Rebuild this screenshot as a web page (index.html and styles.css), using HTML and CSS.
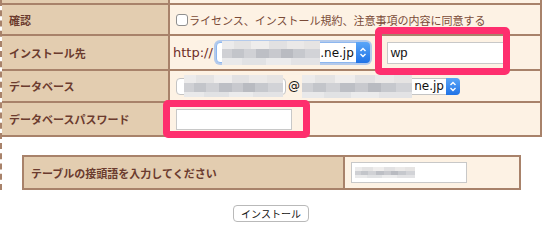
FILE: index.html
```html
<!DOCTYPE html>
<html>
<head>
  <title>インストール</title>
  <link rel="stylesheet" href="styles.css">
</head>
<body>
  <div class="page">
    <div class="setup">
      <div class="label cut"></div>
      <div class="value cut"></div>

      <div class="label">確認</div>
      <div class="value">
        <span class="check"></span><span class="agree">ライセンス、インストール規約、注意事項の内容に同意する</span>
      </div>

      <div class="label">インストール先</div>
      <div class="value">
        <span class="scheme">http://</span>
        <span class="select select-host is-focused">
          <span class="mosaic mosaic-host"></span>
          <span class="select-text">.ne.jp</span>
          <span class="select-arrow">
            <svg width="8" height="11" viewBox="0 0 8 11"><path d="M1.5 4 L4 1.5 L6.5 4 M1.5 7 L4 9.5 L6.5 7" fill="none" stroke="#fff" stroke-width="1.4"/></svg>
          </span>
        </span>
        <span class="marked marked-dir"><span class="textbox textbox-dir">wp</span></span>
      </div>

      <div class="label">データベース</div>
      <div class="value">
        <span class="select select-user">
          <span class="mosaic mosaic-user"></span>
        </span>
        <span class="at">@</span>
        <span class="select select-dbhost">
          <span class="mosaic mosaic-dbhost"></span>
          <span class="select-text">ne.jp</span>
          <span class="select-arrow">
            <svg width="8" height="11" viewBox="0 0 8 11"><path d="M1.5 4 L4 1.5 L6.5 4 M1.5 7 L4 9.5 L6.5 7" fill="none" stroke="#fff" stroke-width="1.4"/></svg>
          </span>
        </span>
      </div>

      <div class="label">データベースパスワード</div>
      <div class="value">
        <span class="marked marked-pass"><span class="textbox textbox-pass"></span></span>
      </div>
    </div>

    <div class="prefix">
      <div class="label">テーブルの接頭語を入力してください</div>
      <div class="value">
        <span class="textbox textbox-prefix"><span class="mosaic mosaic-prefix"></span></span>
      </div>
    </div>
  </div>

  <div class="actions">
    <button class="install" type="button">インストール</button>
  </div>
</body>
</html>
```

FILE: styles.css
```css
body {
  margin: 0;
  background: #fff;
  font-family: "Noto Sans CJK JP", sans-serif;
  font-size: 11px;
}

/* outer frame with the dashed edge */
.page {
  width: 540px;
  border-left: 2px dashed #a8826a;
  height: 190px;
}

/* main settings table */
.setup {
  display: grid;
  grid-template-columns: 166px 370px;
  grid-template-rows: 3px 29px 33px 30px 32px;
  gap: 2px;
  padding: 0 2px 2px 0;
  background: #a8826a;
}

.label {
  background: #e3cdb0;
  color: #6b3b2e;
  font-weight: bold;
  display: flex;
  align-items: center;
  padding-left: 7px;
}

.value {
  background: #fdf2e4;
  color: #7a4a37;
  display: flex;
  align-items: center;
  padding-left: 3px;
}

.cut {
  padding: 0;
}

/* checkbox row */
.check {
  width: 10px;
  height: 10px;
  margin-left: 3px;
  border: 1px solid #8f8f8f;
  border-radius: 3px;
  background: #fff;
}

.agree {
  margin-left: 1px;
}

/* url row */
.scheme {
  font-family: "DejaVu Sans", sans-serif;
  font-size: 13px;
  color: #6e2e28;
}

.select {
  position: relative;
  display: flex;
  align-items: center;
  background: #fff;
  border: 1px solid #c4c4c4;
  border-radius: 4px;
  font-family: "DejaVu Sans", sans-serif;
  font-size: 12px;
  color: #111;
}

.select-host {
  width: 152px;
  height: 19px;
  margin-left: 3px;
}

.is-focused {
  border-color: #8db7ef;
  box-shadow: 0 0 0 2px rgba(120, 170, 240, 0.55);
}

.select-user {
  width: 108px;
  height: 15px;
  margin-left: 3px;
}

.select-dbhost {
  width: 155px;
  height: 15px;
  margin-left: 3px;
}

.select-text {
  margin-left: auto;
  margin-right: 2px;
}

.select-arrow {
  width: 14px;
  align-self: stretch;
  margin: -1px -1px -1px 0;
  border-radius: 0 4px 4px 0;
  background: linear-gradient(#5aa6f8, #2173e6);
  display: flex;
  align-items: center;
  justify-content: center;
}

.at {
  font-family: "DejaVu Sans", sans-serif;
  font-size: 12px;
  color: #111;
  margin-left: 2px;
}

/* blurred values */
.mosaic {
  display: inline-block;
  height: 24px;
  background-image:
    linear-gradient(90deg, #ecebeb 0 12%, #e4e3e3 12% 30%, #efedec 30% 48%, #e2e1e2 48% 66%, #ebe9e8 66% 84%, #e6e4e3 84%),
    linear-gradient(90deg, #cfd0d4 0 10%, #c3c5ca 10% 22%, #d0d1d5 22% 35%, #bdbfc5 35% 48%, #c8c9ce 48% 60%, #b9bbc1 60% 72%, #c6c8cd 72% 85%, #d2d3d7 85%),
    linear-gradient(90deg, #e9e9ea 0 20%, #e1e2e4 20% 45%, #ebebec 45% 70%, #e3e3e5 70%);
  background-size: 100% 8px, 100% 9px, 100% 7px;
  background-position: 0 0, 0 8px, 0 17px;
  background-repeat: no-repeat;
}

.mosaic-host {
  width: 98px;
  margin: 0 0 0 5px;
}

.mosaic-user {
  width: 99px;
  height: 22px;
  margin-left: 7px;
}

.mosaic-dbhost {
  width: 110px;
  height: 23px;
  margin-left: -2px;
}

.mosaic-prefix {
  width: 60px;
  height: 11px;
  margin: 4px 0 0 3px;
  background-size: 100% 4px, 100% 4px, 100% 3px;
  background-position: 0 0, 0 4px, 0 8px;
}

/* text inputs */
.textbox {
  display: inline-block;
  box-sizing: border-box;
  background: #fff;
  border: 1px solid #c8c8c8;
  font-family: "Liberation Sans", sans-serif;
  font-size: 13px;
  color: #111;
}

.textbox-dir {
  width: 119px;
  height: 22px;
  padding: 2px 3px;
}

.textbox-pass {
  width: 116px;
  height: 21px;
}

.textbox-prefix {
  width: 116px;
  height: 21px;
  margin-left: 3px;
  vertical-align: top;
}

/* pink annotation rings over the inputs */
.marked {
  position: relative;
  display: inline-flex;
}

.marked::after {
  content: "";
  position: absolute;
  border: 7px solid #fe2f6e;
  border-radius: 5px;
}

.marked-dir {
  margin-left: 17px;
}

.marked-dir::after {
  left: -12px;
  right: -4px;
  top: -15px;
  bottom: -11px;
}

.marked-pass {
  margin-left: 3px;
}

.marked-pass::after {
  left: -13px;
  right: -18px;
  top: -9px;
  bottom: -8px;
}

/* table prefix box */
.prefix {
  display: grid;
  grid-template-columns: 319px 174px;
  grid-template-rows: 31px;
  gap: 2px;
  padding: 2px;
  width: 495px;
  margin: 18px 0 0 20px;
  background: #a8826a;
}

.prefix .value {
  padding-left: 3px;
}

.actions {
  width: 542px;
  text-align: center;
  margin-top: 15px;
}

.install {
  width: 76px;
  height: 17px;
  padding: 0;
  background: #fff;
  border: 1px solid #b9b9b9;
  border-radius: 4px;
  font-family: "Noto Sans CJK JP", sans-serif;
  font-size: 10px;
  color: #111;
  line-height: 15px;
}
```
